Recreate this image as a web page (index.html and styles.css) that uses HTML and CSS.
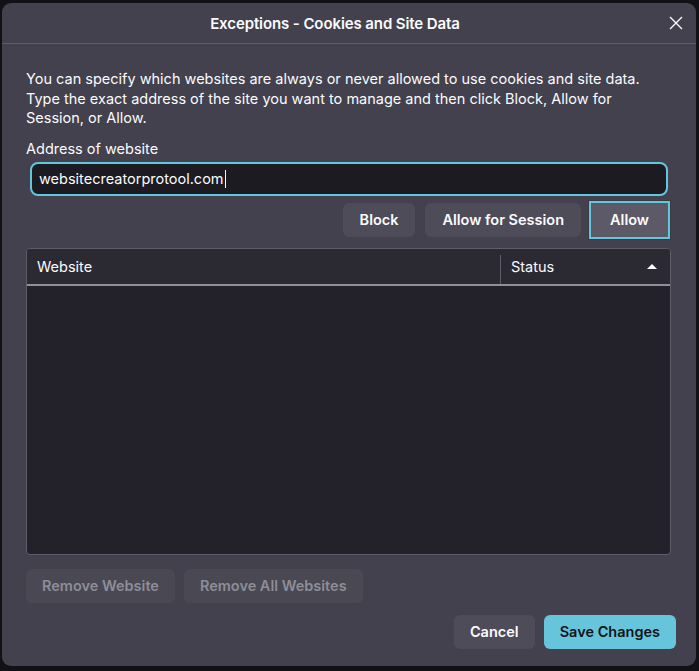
FILE: index.html
```html
<!DOCTYPE html>
<html lang="en">
<head>
    <meta charset="UTF-8">
    <title>Exceptions - Cookies and Site Data</title>
    <link rel="stylesheet" href="styles.css">
</head>
<body>
    <div class="dialog">
        <div class="dialog-header">
            <span class="dialog-title">Exceptions - Cookies and Site Data</span>
            <button class="close-btn" aria-label="Close">
                <svg width="14" height="14" viewBox="0 0 14 14"><path d="M1 1L13 13M13 1L1 13" stroke="#fbfbfe" stroke-width="1.4" fill="none"/></svg>
            </button>
        </div>
        <div class="dialog-body">
            <p class="description">You can specify which websites are always or never allowed to use cookies and site data. Type the exact address of the site you want to manage and then click Block, Allow for Session, or Allow.</p>
            <label class="field-label" for="url">Address of website</label>
            <div class="url-field">
                <span id="url">websitecreatorprotool.com</span><span class="caret"></span>
            </div>
            <div class="action-row">
                <button class="btn">Block</button>
                <button class="btn">Allow for Session</button>
                <button class="btn btn-focused">Allow</button>
            </div>

            <div class="site-table">
                <div class="table-head">
                    <div class="col-site">Website</div>
                    <div class="col-status">Status <span class="sort-arrow"></span></div>
                </div>
                <div class="table-body"></div>
            </div>

            <div class="remove-row">
                <button class="btn btn-disabled">Remove Website</button>
                <button class="btn btn-disabled">Remove All Websites</button>
            </div>

            <div class="footer-row">
                <button class="btn">Cancel</button>
                <button class="btn btn-primary">Save Changes</button>
            </div>
        </div>
    </div>
</body>
</html>
```

FILE: styles.css
```css
body {
    margin: 0;
    padding: 3px 3px 5px 2px;
    background-color: #121116;
    font-family: 'Inter', 'Liberation Sans', sans-serif;
    color: #fbfbfe;
}

.dialog {
    width: 694px;
    height: 663px;
    background: #42414d;
    border-radius: 9px;
    display: flex;
    flex-direction: column;
    box-sizing: border-box;
}

.dialog-header {
    height: 40px;
    border-bottom: 1px solid #5e5d69;
    display: flex;
    align-items: center;
    justify-content: center;
    padding-right: 28px;
    position: relative;
    flex-shrink: 0;
}

.dialog-title {
    font-size: 15px;
    font-weight: 600;
    letter-spacing: -0.1px;
}

.close-btn {
    position: absolute;
    right: 13px;
    top: 13px;
    background: none;
    border: none;
    padding: 0;
    width: 14px;
    height: 14px;
    display: flex;
}

.dialog-body {
    padding: 25px 25px 0 24px;
    display: flex;
    flex-direction: column;
    flex: 1;
}

.description {
    margin: 0;
    font-size: 14.5px;
    line-height: 19.5px;
}

.field-label {
    margin-top: 11px;
    font-size: 14.5px;
    line-height: 19px;
}

.url-field {
    margin: 4px 3px 0 4px;
    height: 30px;
    border: 2px solid #62c6dc;
    border-radius: 8px;
    background: #1c1b22;
    display: flex;
    align-items: center;
    padding: 0 7px;
    font-size: 14.5px;
}

.caret {
    display: inline-block;
    width: 1px;
    height: 18px;
    background: #fbfbfe;
    margin-left: 1px;
}

.btn {
    font-family: inherit;
    font-size: 14.5px;
    font-weight: 600;
    color: #fbfbfe;
    background: #4d4c58;
    border: none;
    border-radius: 6px;
    height: 34px;
    padding: 0 16px;
}

.action-row {
    margin-top: 5px;
    margin-right: 1px;
    display: flex;
    justify-content: flex-end;
    gap: 10px;
}

.action-row .btn {
    margin-top: 2px;
    padding: 0 17px;
}

.action-row .btn-focused {
    margin-top: 0;
    margin-left: -2px;
    padding: 0;
    background: #5b5a66;
    border: 2px solid #62c6dc;
    border-radius: 0;
    height: 38px;
    width: 81px;
    outline: 1px solid #3a3944;
}

.site-table {
    margin-top: 9px;
    height: 305px;
    border: 1px solid #5e5d69;
    border-radius: 4px;
    background: #23222b;
    display: flex;
    flex-direction: column;
    overflow: hidden;
}

.table-head {
    height: 35px;
    background: #2b2a33;
    border-bottom: 2px solid #8f8f9d;
    display: flex;
    align-items: stretch;
    font-size: 14.5px;
    flex-shrink: 0;
}

.col-site {
    width: 463px;
    padding-left: 10px;
    display: flex;
    align-items: center;
    margin: 6px 0 0;
    border-right: 1px solid #5e5d69;
    padding-bottom: 6px;
}

.col-status {
    flex: 1;
    padding: 0 13px 0 10px;
    display: flex;
    align-items: center;
    justify-content: space-between;
}

.sort-arrow {
    width: 0;
    height: 0;
    border-left: 5px solid transparent;
    border-right: 5px solid transparent;
    border-bottom: 5px solid #fbfbfe;
}

.table-body {
    flex: 1;
}

.remove-row {
    margin-top: 14px;
    display: flex;
    gap: 9px;
}

.btn-disabled {
    color: #8e8d98;
    background: #494853;
    padding: 0 16px;
}

.footer-row {
    margin-top: 12px;
    display: flex;
    justify-content: flex-end;
    gap: 9px;
    margin-right: -5px;
}

.btn-primary {
    background: #66c5db;
    color: #15141a;
}
```
